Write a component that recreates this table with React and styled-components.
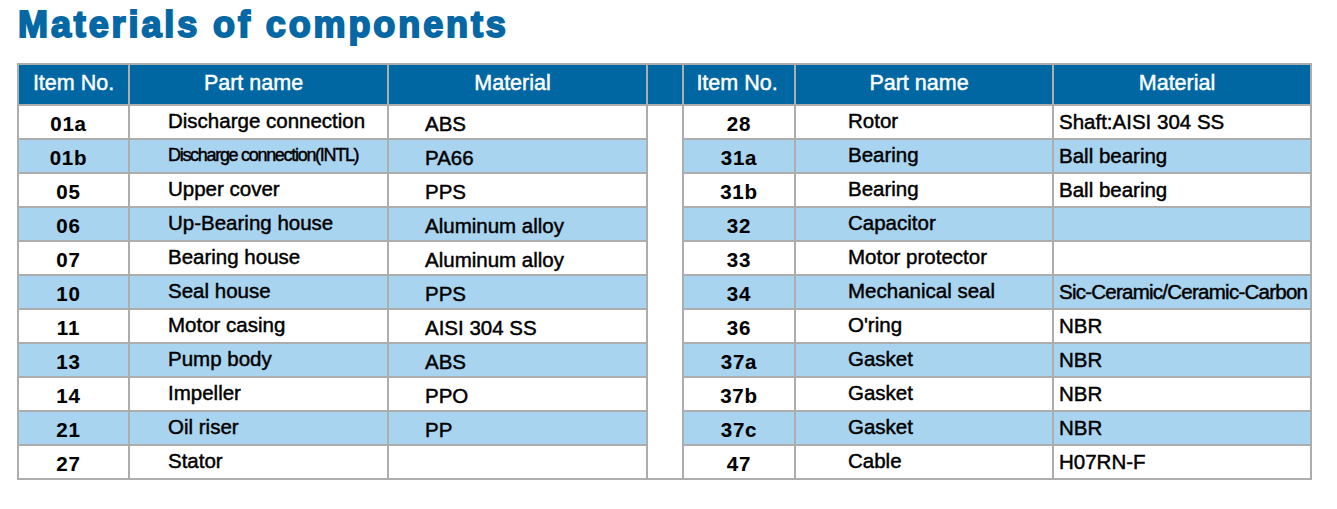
import React from "react";
import styled, { createGlobalStyle } from "styled-components";

const Global = createGlobalStyle`
  html, body { margin: 0; padding: 0; background: #ffffff; }
  body { font-family: "Liberation Sans", Arial, sans-serif; color: #000; }
`;

const Page = styled.div`
  padding: 7px 0 0 17px;
  width: 1320px;
`;

const Title = styled.h1`
  margin: 0 0 20px 0;
  padding-left: 1px;
  height: 36px;
  font-family: "Liberation Sans", Arial, sans-serif;
  font-weight: 700;
  font-size: 36px;
  line-height: 36px;
  letter-spacing: 2.9px;
  color: #0568a4;
  -webkit-text-stroke: 1.9px #0568a4;
  white-space: nowrap;
`;

const Grid = styled.div`
  display: grid;
  grid-template-columns: 109px 257px 257px 34px 110px 256px 256px;
  grid-template-rows: 39px repeat(11, 32px);
  gap: 2px;
  padding: 2px;
  background: #adadad;
  width: max-content;
`;

const HeadCell = styled.div`
  background: #0067a3;
  color: #ffffff;
  font-size: 21.5px;
  display: flex;
  align-items: center;
  justify-content: center;
  padding-right: ${(p) => p.$pr || 0}px;
  padding-bottom: 2px;
  box-sizing: border-box;
  white-space: nowrap;
  -webkit-text-stroke: 0.45px #ffffff;
`;

const Spacer = styled.div`
  background: #ffffff;
  grid-column: 4;
  grid-row: 2 / span 11;
`;

const Cell = styled.div`
  background: ${(p) => (p.$shade ? "#a9d4ef" : "#ffffff")};
  display: flex;
  align-items: center;
  justify-content: ${(p) => (p.$center ? "center" : "flex-start")};
  box-sizing: border-box;
  padding-left: ${(p) => p.$pl || 0}px;
  padding-right: ${(p) => p.$pr || 0}px;
  padding-top: ${(p) => (p.$dy > 0 ? p.$dy * 2 : 0)}px;
  padding-bottom: ${(p) => (p.$dy < 0 ? -p.$dy * 2 : 0)}px;
  font-size: 20.5px;
  white-space: nowrap;
  overflow: visible;
  -webkit-text-stroke: 0.45px #000;
`;

const ItemText = styled.span`
  font-weight: 700;
  font-size: 20.5px;
  letter-spacing: 0.8px;
  -webkit-text-stroke: 0.1px #000;
`;

const Tight = styled.span`
  font-size: ${(p) => p.$size || 20.5}px;
  letter-spacing: ${(p) => p.$ls}px;
`;

const left = [
  ["01a", "Discharge connection", "ABS"],
  ["01b", "Discharge connection(INTL)", "PA66"],
  ["05", "Upper cover", "PPS"],
  ["06", "Up-Bearing house", "Aluminum alloy"],
  ["07", "Bearing house", "Aluminum alloy"],
  ["10", "Seal house", "PPS"],
  ["11", "Motor casing", "AISI 304 SS"],
  ["13", "Pump body", "ABS"],
  ["14", "Impeller", "PPO"],
  ["21", "Oil riser", "PP"],
  ["27", "Stator", ""],
];

const right = [
  ["28", "Rotor", "Shaft:AISI 304 SS"],
  ["31a", "Bearing", "Ball bearing"],
  ["31b", "Bearing", "Ball bearing"],
  ["32", "Capacitor", ""],
  ["33", "Motor protector", ""],
  ["34", "Mechanical seal", "Sic-Ceramic/Ceramic-Carbon"],
  ["36", "O'ring", "NBR"],
  ["37a", "Gasket", "NBR"],
  ["37b", "Gasket", "NBR"],
  ["37c", "Gasket", "NBR"],
  ["47", "Cable", "H07RN-F"],
];

function renderName(name) {
  if (name === "Discharge connection(INTL)")
    return <Tight $size={18} $ls={-1.3}>{name}</Tight>;
  return name;
}

function renderMaterial(m) {
  if (m === "Sic-Ceramic/Ceramic-Carbon") return <Tight $ls={-0.75}>{m}</Tight>;
  return m;
}

export default function App() {
  const cells = [];
  left.forEach((l, i) => {
    const r = right[i];
    const shade = i % 2 === 1;
    const row = i + 2;
    cells.push(
      <Cell key={`l0-${i}`} $shade={shade} $center $pr={10} $dy={2} style={{ gridRow: row, gridColumn: 1 }}>
        <ItemText>{l[0]}</ItemText>
      </Cell>,
      <Cell key={`l1-${i}`} $shade={shade} $pl={38} $dy={-1} style={{ gridRow: row, gridColumn: 2 }}>
        {renderName(l[1])}
      </Cell>,
      <Cell key={`l2-${i}`} $shade={shade} $pl={36} $dy={2} style={{ gridRow: row, gridColumn: 3 }}>
        {l[2]}
      </Cell>,
      <Cell key={`r0-${i}`} $shade={shade} $center $dy={2} style={{ gridRow: row, gridColumn: 5 }}>
        <ItemText>{r[0]}</ItemText>
      </Cell>,
      <Cell key={`r1-${i}`} $shade={shade} $pl={52} $dy={-1} style={{ gridRow: row, gridColumn: 6 }}>
        {r[1]}
      </Cell>,
      <Cell key={`r2-${i}`} $shade={shade} $pl={5} $dy={0} style={{ gridRow: row, gridColumn: 7 }}>
        {renderMaterial(r[2])}
      </Cell>
    );
  });

  return (
    <>
      <Global />
      <Page>
        <Title>Materials of components</Title>
        <Grid>
          <HeadCell>Item No.</HeadCell>
          <HeadCell $pr={10}>Part name</HeadCell>
          <HeadCell $pr={10}>Material</HeadCell>
          <HeadCell />
          <HeadCell $pr={4}>Item No.</HeadCell>
          <HeadCell $pr={10}>Part name</HeadCell>
          <HeadCell $pr={10}>Material</HeadCell>
          <Spacer />
          {cells}
        </Grid>
      </Page>
    </>
  );
}
